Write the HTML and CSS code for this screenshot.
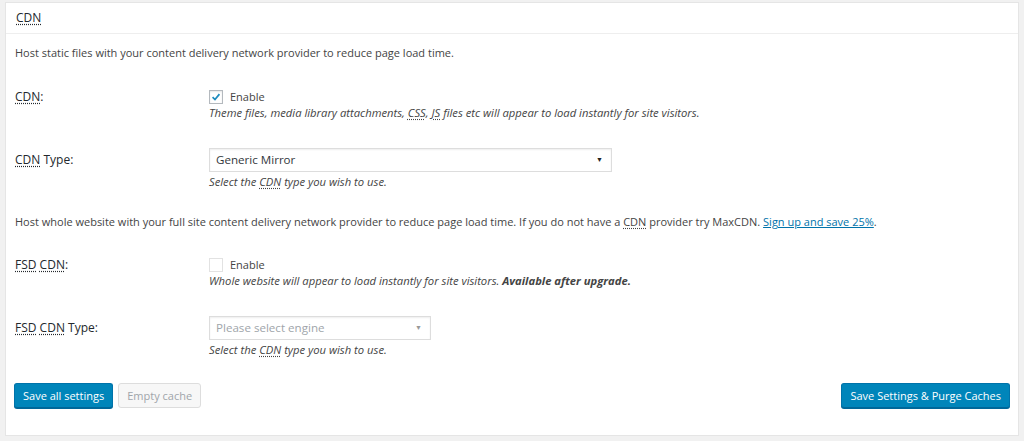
FILE: index.html
```html
<!DOCTYPE html>
<html>
<head>
<meta charset="utf-8">
<link rel="stylesheet" href="styles.css">
</head>
<body>
<div class="panel">
  <div class="panel-head"><abbr>CDN</abbr></div>
  <div class="panel-body">
    <p class="intro">Host static files with your content delivery network provider to reduce page load time.</p>

    <div class="row row-check first">
      <div class="label"><abbr>CDN</abbr>:</div>
      <div class="field">
        <div class="check-line"><span class="checkbox checked"><svg viewBox="0 0 14 14" width="14" height="14"><path d="M3 7.2 L5.8 10 L11 3.6" fill="none" stroke="#1e8cbe" stroke-width="2"/></svg></span><span>Enable</span></div>
        <div class="desc">Theme files, media library attachments, <abbr>CSS</abbr>, <abbr>JS</abbr> files etc will appear to load instantly for site visitors.</div>
      </div>
    </div>

    <div class="row row-select">
      <div class="label"><abbr>CDN</abbr> Type:</div>
      <div class="field">
        <div class="select select-wide"><span>Generic Mirror</span><span class="arrow">&#9660;</span></div>
        <div class="desc">Select the <abbr>CDN</abbr> type you wish to use.</div>
      </div>
    </div>

    <p class="intro intro2">Host whole website with your full site content delivery network provider to reduce page load time. If you do not have a <abbr>CDN</abbr> provider try MaxCDN. <a href="#">Sign up and save 25%</a>.</p>

    <div class="row row-check">
      <div class="label"><abbr>FSD</abbr> <abbr>CDN</abbr>:</div>
      <div class="field">
        <div class="check-line"><span class="checkbox disabled"></span><span>Enable</span></div>
        <div class="desc">Whole website will appear to load instantly for site visitors. <b>Available after upgrade.</b></div>
      </div>
    </div>

    <div class="row row-select">
      <div class="label"><abbr>FSD</abbr> <abbr>CDN</abbr> Type:</div>
      <div class="field">
        <div class="select select-narrow disabled"><span>Please select engine</span><span class="arrow">&#9660;</span></div>
        <div class="desc">Select the <abbr>CDN</abbr> type you wish to use.</div>
      </div>
    </div>

    <div class="actions">
      <div class="left-actions">
        <button class="btn btn-primary">Save all settings</button>
        <button class="btn btn-disabled">Empty cache</button>
      </div>
      <button class="btn btn-primary">Save Settings &amp; Purge Caches</button>
    </div>
  </div>
</div>
</body>
</html>
```

FILE: styles.css
```css
html, body {
  margin: 0;
  padding: 0;
  background: #f1f1f1;
}
body {
  font-family: "Open Sans", "Noto Sans", sans-serif;
  font-size: 11px;
  color: #444;
  padding: 2px 5px 0 5px;
}
.panel {
  background: #fff;
  border: 1px solid #e5e5e5;
  box-sizing: border-box;
  height: 434px;
}
.panel-head {
  height: 30px;
  line-height: 30px;
  padding-left: 10px;
  border-bottom: 1px solid #eee;
  font-size: 12px;
  color: #23282d;
}
abbr {
  text-decoration: underline dotted;
  text-underline-offset: 2px;
}
.panel-body {
  padding: 0 8px 0 9px;
}
.intro {
  margin: 11px 0 0 0;
  line-height: 16px;
}
.intro2 {
  margin-top: 24px;
}
a {
  color: #0073aa;
}
.row {
  display: grid;
  grid-template-columns: 194px 1fr;
  margin-top: 27px;
  line-height: 16px;
}
.row.first {
  margin-top: 28px;
}
.label {
  color: #23282d;
  font-size: 12px;
}
.row-select .label {
  line-height: 24px;
}
.check-line {
  display: flex;
  align-items: center;
  height: 16px;
}
.checkbox {
  width: 14px;
  height: 14px;
  border: 1px solid #b4b9be;
  box-sizing: border-box;
  margin-right: 7px;
  display: flex;
  align-items: center;
  justify-content: center;
  background: #fff;
  box-shadow: inset 0 1px 2px rgba(0,0,0,.1);
}
.checkbox.disabled {
  border-color: #e2e2e2;
  box-shadow: none;
}
.checkbox svg {
  width: 12px;
  height: 12px;
}
.desc {
  font-style: italic;
  font-size: 11.25px;
}
.row-select .desc {
  margin-top: 2px;
}
.select {
  height: 24px;
  box-sizing: border-box;
  border: 1px solid #ddd;
  box-shadow: inset 0 1px 2px rgba(0,0,0,.07);
  display: flex;
  align-items: center;
  justify-content: space-between;
  padding: 0 8px 0 6px;
  color: #32373c;
  font-size: 11.6px;
}
.select-wide { width: 403px; }
.select-narrow { width: 222px; }
.select .arrow {
  font-size: 7px;
  color: #222;
}
.select.disabled {
  color: #a0a5aa;
}
.select.disabled .arrow {
  color: #999;
}
.actions {
  margin-top: 25px;
  display: flex;
  justify-content: space-between;
  align-items: center;
  margin-left: -1px;
}
.left-actions {
  display: flex;
  gap: 5px;
}
.btn {
  font-family: inherit;
  font-size: 11px;
  height: 25px;
  padding: 0 8px;
  border-radius: 3px;
  box-sizing: border-box;
  cursor: pointer;
}
.btn-primary {
  background: #0085ba;
  border: 1px solid #0073aa;
  border-bottom-color: #006799;
  color: #fff;
  box-shadow: 0 1px 0 #006799;
}
.btn-disabled {
  background: #f7f7f7;
  border: 1px solid #ddd;
  color: #a0a5aa;
}
```
